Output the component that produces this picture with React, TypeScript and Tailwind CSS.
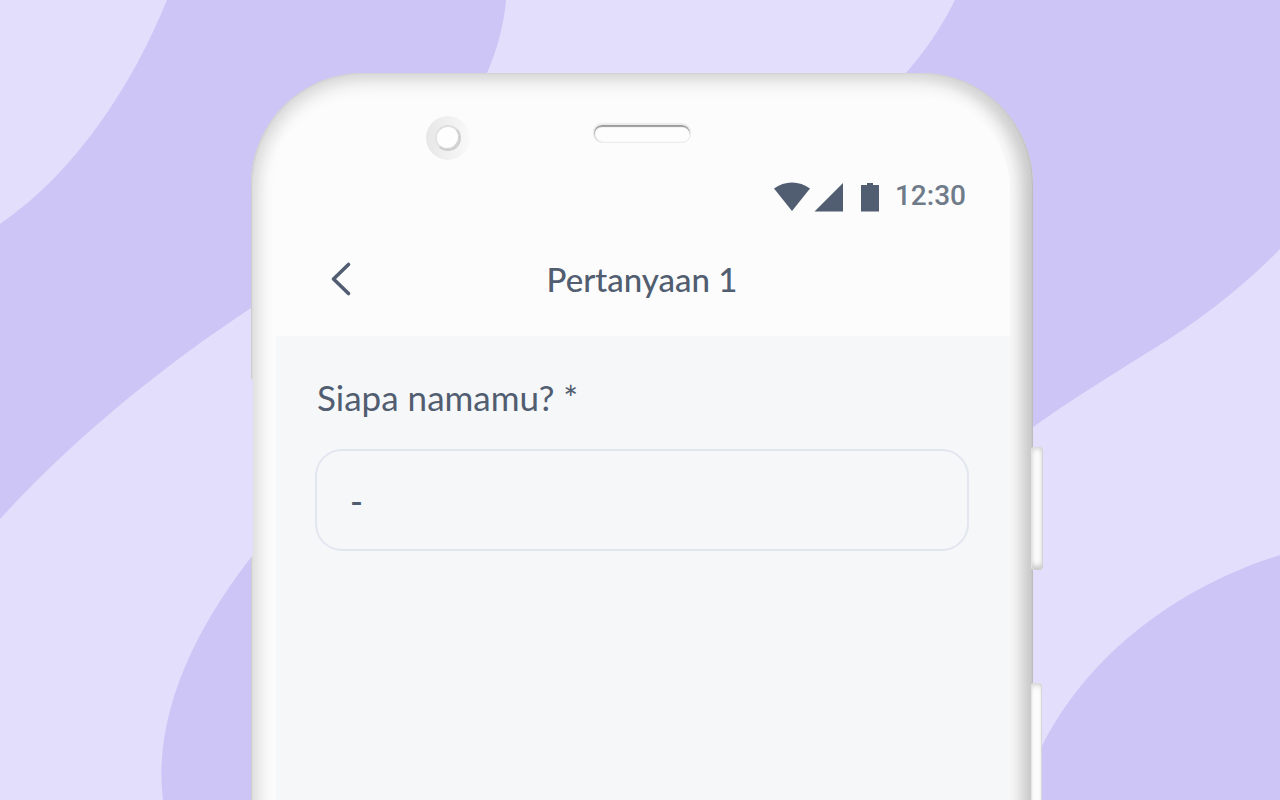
import { useState } from "react";

function Backdrop() {
  return (
    <svg
      className="absolute inset-0 h-full w-full"
      viewBox="0 0 1280 800"
      preserveAspectRatio="xMidYMid slice"
      aria-hidden="true"
    >
      <rect width="1280" height="800" fill="#e2defb" />
      <g fill="#ccc5f6">
        <path d="M167 0C133 84 76 172 0 224V519C72 440 160 368 251 308C360 245 460 150 487 73C497 50 504 25 506 0Z" />
        <path d="M955 0C943 25 926 50 906 73C860 140 800 230 760 300L900 560C940 510 985 462 1033 427C1080 394 1115 373 1150 351C1200 321 1245 285 1280 249V0Z" />
        <path d="M260 546C200 620 152 710 163 800H400V546Z" />
        <path d="M1280 555C1170 590 1085 660 1042 746L1020 800H1280Z" />
      </g>
    </svg>
  );
}

function Sensors() {
  return (
    <div className="grid grid-cols-[1fr_98px_1fr] items-start pt-[18px]">
      <div className="mr-[123px] flex size-11 items-center justify-center justify-self-end rounded-full bg-linear-to-r from-[#e7e7e7] to-[#f9f9f9]">
        <div className="size-[26px] rounded-full border-2 border-t-[#dedede] border-r-[#cfcfcf] border-b-[#cdcdcd] border-l-[#e3e3e3] bg-[#fefefe] shadow-[inset_-1px_-1px_0_#d2d2d2]" />
      </div>
      <div className="mt-2 h-[19px] rounded-[9px] border border-[#ececec] bg-[#fdfdfd] shadow-[inset_0_2px_1px_#9c9c9c,inset_1px_0_1px_#c8c8c8,0_-1px_1px_#ececec]" />
    </div>
  );
}

function StatusBar() {
  return (
    <div className="flex h-[74px] items-center justify-end pr-11">
      <svg className="h-[30px] w-[108px]" viewBox="0 0 108 30" fill="#515d70" aria-hidden="true">
        <path d="M1 6.500C11.500 -1.500 26.500 -1.500 37 6.500L19 29Z" />
        <path d="M70 1V29.500H41.500Z" />
        <path d="M94 1H100V3H106V29.500H88V3H94Z" />
      </svg>
      <span className="ml-[14px] pb-0.5 font-[Roboto,sans-serif] text-[28px] leading-8 font-medium text-[#707b8a]">12:30</span>
    </div>
  );
}

function AppHeader() {
  return (
    <header className="grid h-[90px] grid-cols-[80px_1fr_80px] items-center">
      <button type="button" aria-label="Kembali" className="ml-[54px] flex size-12 items-center justify-center justify-self-center">
        <svg className="h-9 w-6" viewBox="0 0 24 36" fill="none" stroke="#515d70" strokeWidth="3.600" strokeLinecap="round" strokeLinejoin="round" aria-hidden="true">
          <path d="M19.500 3.500L4.500 18L19.500 32.500" />
        </svg>
      </button>
      <h1 className="text-center text-[33px] leading-10 font-medium">Pertanyaan 1</h1>
    </header>
  );
}

function Question() {
  const [name, setName] = useState("-");
  return (
    <form className="mt-3 ml-0.5 flex flex-1 flex-col bg-[#f5f7f9] pt-[41px] pr-[41px] pl-[39px]">
      <label htmlFor="nama" className="ml-0.5 text-[35px] leading-10">
        Siapa namamu? *
      </label>
      <input
        id="nama"
        value={name}
        onChange={(event) => setName(event.target.value)}
        className="mt-8 h-[102px] w-full rounded-[27px] border-2 border-[#e2e6ef] bg-transparent px-[33px] text-[35px] font-medium outline-none"
      />
    </form>
  );
}

export default function App() {
  return (
    <main className="relative flex min-h-screen flex-col items-center overflow-hidden pt-[73px] pl-1 font-[Lato,sans-serif] text-[#515d70]">
      <Backdrop />
      <div className="relative -mb-10 flex w-full max-w-[782px] flex-1 flex-col">
        <div className="flex flex-1 flex-col rounded-t-[112px] bg-[#fcfcfc] px-[23px] pt-[25px] shadow-[inset_0_1px_1px_#d4d4d4,inset_1px_0_1px_#cccccc,inset_-1px_0_1px_#b8b8b8,inset_0_12px_20px_-5px_#d9d9d9,inset_9px_0_18px_-4px_#d3d3d3,inset_-8px_0_14px_-4px_#b8b8b8,inset_-20px_0_16px_-4px_#dedede]">
          <div className="flex flex-1 flex-col rounded-t-[90px] bg-[#fcfcfc]">
            <Sensors />
            <StatusBar />
            <AppHeader />
            <Question />
          </div>
        </div>
        <div className="absolute top-[306px] left-0 h-[178px] w-0.5 rounded-r-sm bg-[#e2defb]" />
        <div className="absolute top-[374px] -right-[10px] h-[123px] w-3 rounded-[4px] bg-[#fcfcfc] shadow-[inset_-1px_0_1px_#d4d4d4,inset_1px_0_1px_#e4e4e4,inset_0_3px_5px_-1px_#d4d4d4,inset_0_-4px_6px_-1px_#bdbdbd]" />
        <div className="absolute top-[610px] -right-[9px] bottom-0 w-[11px] rounded-t-[4px] bg-[#fcfcfc] shadow-[inset_-1px_0_1px_#d4d4d4,inset_1px_0_1px_#e4e4e4,inset_0_3px_5px_-1px_#d0d0d0]" />
      </div>
    </main>
  );
}
